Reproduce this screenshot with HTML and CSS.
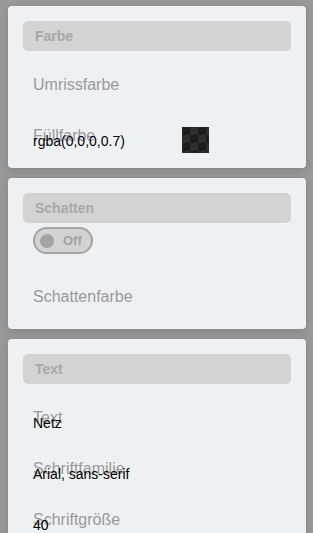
FILE: index.html
```html
<!DOCTYPE html>
<html lang="de">
<head>
    <meta charset="UTF-8">
    <meta name="viewport" content="width=device-width, initial-scale=1.0">
    <title>Eigenschaften</title>
    <link rel="stylesheet" href="styles.css">
</head>
<body>

    <!-- Farbe -->
    <div class="panel">
        <div class="panel-title">Farbe</div>
        <div class="prop">
            <span class="prop-label">Umrissfarbe</span>
        </div>
        <div class="prop">
            <span class="prop-label">Füllfarbe</span>
            <div class="prop-value">
                <span class="value-text wide">rgba(0,0,0,0.7)</span>
                <span class="swatch"></span>
            </div>
        </div>
    </div>

    <!-- Schatten -->
    <div class="panel">
        <div class="panel-title">Schatten</div>
        <div class="toggle">
            <span class="toggle-knob"></span>
            <span class="toggle-text">Off</span>
        </div>
        <div class="prop prop-spaced">
            <span class="prop-label">Schattenfarbe</span>
        </div>
    </div>

    <!-- Text -->
    <div class="panel">
        <div class="panel-title">Text</div>
        <div class="prop">
            <span class="prop-label">Text</span>
            <div class="prop-value"><span class="value-text">Netz</span></div>
        </div>
        <div class="prop">
            <span class="prop-label">Schriftfamilie</span>
            <div class="prop-value"><span class="value-text">Arial, sans-serif</span></div>
        </div>
        <div class="prop">
            <span class="prop-label">Schriftgröße</span>
            <div class="prop-value"><span class="value-text">40</span></div>
        </div>
        <div class="prop">
            <span class="prop-label">Schriftfarbe</span>
        </div>
    </div>

</body>
</html>
```

FILE: styles.css
```css
    /* Page */
    html, body {
        height: 100%;
        overflow: hidden;
    }

    body {
        font-family: "Liberation Sans", Arial, sans-serif;
        background: #999999;
        margin: 0;
        padding: 6px 7px 0 8px;
        box-sizing: border-box;
        display: flex;
        flex-direction: column;
        gap: 10px;
    }

    /* Panel Card */
    .panel {
        background: #edf1f4;
        border-radius: 4px;
        box-shadow: 0px 2px 8px rgba(0, 0, 0, 0.15);
        padding: 15px;
        flex-shrink: 0;
    }

    /* Panel Title Bar */
    .panel-title {
        height: 30px;
        line-height: 30px;
        padding-left: 12px;
        background: #d3d3d3;
        border-radius: 5px;
        font-size: 14px;
        font-weight: bold;
        color: #a8a8a8;
    }

    /* Property Rows (label and value share one cell) */
    .prop {
        display: grid;
        grid-template-areas: "cell";
        min-height: 26px;
        margin-top: 25px;
        padding-left: 10px;
    }

    .prop-spaced {
        margin-top: 34px;
    }

    .prop-label {
        grid-area: cell;
        font-size: 16px;
        line-height: 18px;
        color: #999999;
    }

    .prop-value {
        grid-area: cell;
        display: flex;
        align-items: center;
        height: 26px;
    }

    .value-text {
        font-size: 14px;
        line-height: 16px;
        color: #000000;
        margin-top: 1px;
    }

    .value-text.wide {
        width: 149px;
        margin-top: 2px;
    }

    /* Colour Swatch */
    .swatch {
        width: 27px;
        height: 26px;
        background:
            linear-gradient(rgba(0, 0, 0, 0.7), rgba(0, 0, 0, 0.7)),
            conic-gradient(#9a9a9a 25%, #666666 0 50%, #9a9a9a 0 75%, #666666 0);
        background-size: 100% 100%, 16px 16px;
    }

    /* Toggle Switch */
    .toggle {
        display: flex;
        align-items: center;
        gap: 9px;
        width: 60px;
        height: 27px;
        margin: 4px 0 0 10px;
        padding-left: 5px;
        box-sizing: border-box;
        border: 2px solid #a3a3a3;
        border-radius: 14px;
        background: #d3d3d3;
    }

    .toggle-knob {
        width: 14px;
        height: 14px;
        border-radius: 50%;
        background: #a3a3a3;
    }

    .toggle-text {
        font-size: 13px;
        font-weight: bold;
        color: #a3a3a3;
    }
```
